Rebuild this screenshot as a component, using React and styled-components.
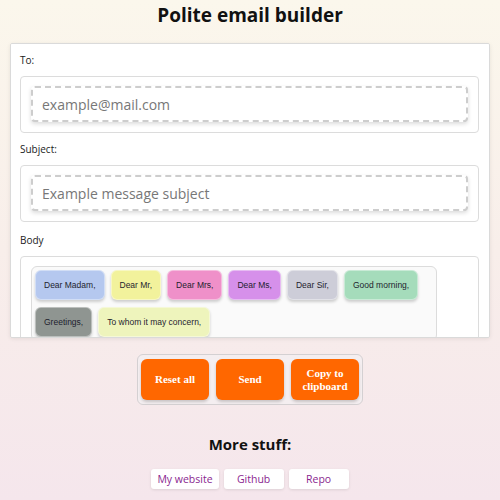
import styled, { createGlobalStyle } from "styled-components";

const GlobalStyle = createGlobalStyle`
  html, body {
    margin: 0;
    padding: 0;
  }
  body {
    font-family: "Open Sans", "Noto Sans", sans-serif;
    color: #111;
  }
`

const Page = styled.div`
  min-height: 500px;
  background: linear-gradient(180deg, #fbf7ec 0%, #f8eeea 50%, #f5e6ec 100%);
  display: flex;
  flex-direction: column;
  align-items: stretch;
`

const Title = styled.h1`
  margin: 0;
  height: 43px;
  line-height: 30px;
  font-size: 19px;
  font-weight: 700;
  text-align: center;
`

const FormCard = styled.div`
  margin: 0 10px;
  height: 295px;
  box-sizing: border-box;
  overflow-y: scroll;
  background: #fff;
  border: 1px solid #dadada;
  border-radius: 2px;
  box-shadow: 0 1px 4px rgba(0, 0, 0, 0.08);
  padding: 0 10px 10px 9px;

  &::-webkit-scrollbar {
    width: 4px;
  }
  &::-webkit-scrollbar-track {
    background: #ededed;
  }
  &::-webkit-scrollbar-thumb {
    background: #c4c4c4;
  }
`

const Label = styled.div`
  font-size: 10px;
  line-height: 16px;
  padding: ${p => (p.$loose ? "10px 0 8px" : "8px 0")};
  color: #222;
`

const FieldBox = styled.div`
  border: 1px solid #dcdcdc;
  border-radius: 4px;
  padding: 9px 10px 10px;
`

const DashedInput = styled.input`
  display: block;
  width: 100%;
  height: 36px;
  box-sizing: border-box;
  border: 2px dashed #cdcdcd;
  border-radius: 4px;
  box-shadow: 0 2px 4px rgba(0, 0, 0, 0.14);
  padding: 0 9px;
  font-family: "Open Sans", "Noto Sans", sans-serif;
  font-size: 14px;
  color: #333;
  background: #fff;
  outline: none;

  &::placeholder {
    color: #777;
  }
`

const ChipTray = styled.div`
  width: 406px;
  box-sizing: border-box;
  border: 1px solid #dcdcdc;
  border-radius: 6px;
  background: #fafafa;
  padding: 3px;
  display: flex;
  flex-wrap: wrap;
  gap: 7px 6px;
`

const Chip = styled.button`
  height: 30px;
  padding: 0 8px;
  margin: 0;
  border: 1px solid rgba(255, 255, 255, 0.4);
  border-radius: 6px;
  background: ${p => p.$bg};
  box-shadow: 0 2px 3px rgba(0, 0, 0, 0.18);
  font-family: "Liberation Sans", Tahoma, sans-serif;
  font-size: 8.5px;
  color: #1e1e2e;
  white-space: nowrap;
  cursor: pointer;
`

const BodyText = styled.textarea`
  display: block;
  margin-top: 10px;
  width: 100%;
  height: 160px;
  box-sizing: border-box;
  border: 2px dashed #cdcdcd;
  border-radius: 4px;
`

const ActionBar = styled.div`
  align-self: center;
  margin-top: 16px;
  display: flex;
  gap: 7px;
  padding: 4px 3px;
  border: 1px solid #d4d0d2;
  border-radius: 6px;
  background: #f4eef0;
`

const ActionButton = styled.button`
  width: 68px;
  height: 41px;
  border: none;
  border-radius: 6px;
  background: #ff6700;
  box-shadow: 0 2px 3px rgba(0, 0, 0, 0.18);
  color: #fff;
  font-family: "Liberation Serif", "DejaVu Serif", serif;
  font-weight: 700;
  font-size: 11px;
  line-height: 13px;
  padding: 0 6px;
  cursor: pointer;
`

const SubTitle = styled.h2`
  margin: 28px 0 0;
  text-align: center;
  font-size: 15px;
  line-height: 22px;
  font-weight: 700;
`

const LinkRow = styled.div`
  margin-top: 14px;
  display: flex;
  justify-content: center;
  gap: 5px;
`

const LinkBox = styled.a`
  min-width: 60px;
  height: 20px;
  box-sizing: border-box;
  padding: 0 6px;
  display: flex;
  align-items: center;
  justify-content: center;
  background: #fff;
  border-radius: 3px;
  box-shadow: 0 1px 3px rgba(0, 0, 0, 0.1);
  color: #8a1f8f;
  font-size: 10.5px;
  text-decoration: none;
`

const greetings = [
  ["Dear Madam,", "#b5c8ef"],
  ["Dear Mr,", "#f2f29c"],
  ["Dear Mrs,", "#ef90c9"],
  ["Dear Ms,", "#d690ea"],
  ["Dear Sir,", "#cdcdd8"],
  ["Good morning,", "#a5dcbb"],
  ["Greetings,", "#8f9591"],
  ["To whom it may concern,", "#eef4bc"],
]

export default function App() {
  return (
    <Page>
      <GlobalStyle />
      <Title>Polite email builder</Title>
      <FormCard>
        <Label>To:</Label>
        <FieldBox>
          <DashedInput placeholder="example@mail.com" />
        </FieldBox>
        <Label>Subject:</Label>
        <FieldBox>
          <DashedInput placeholder="Example message subject" />
        </FieldBox>
        <Label $loose>Body</Label>
        <FieldBox>
          <ChipTray>
            {greetings.map(([text, bg]) => (
              <Chip key={text} $bg={bg}>{text}</Chip>
            ))}
          </ChipTray>
          <BodyText />
        </FieldBox>
      </FormCard>
      <ActionBar>
        <ActionButton>Reset all</ActionButton>
        <ActionButton>Send</ActionButton>
        <ActionButton>Copy to clipboard</ActionButton>
      </ActionBar>
      <SubTitle>More stuff:</SubTitle>
      <LinkRow>
        <LinkBox href="#">My website</LinkBox>
        <LinkBox href="#">Github</LinkBox>
        <LinkBox href="#">Repo</LinkBox>
      </LinkRow>
    </Page>
  )
}
